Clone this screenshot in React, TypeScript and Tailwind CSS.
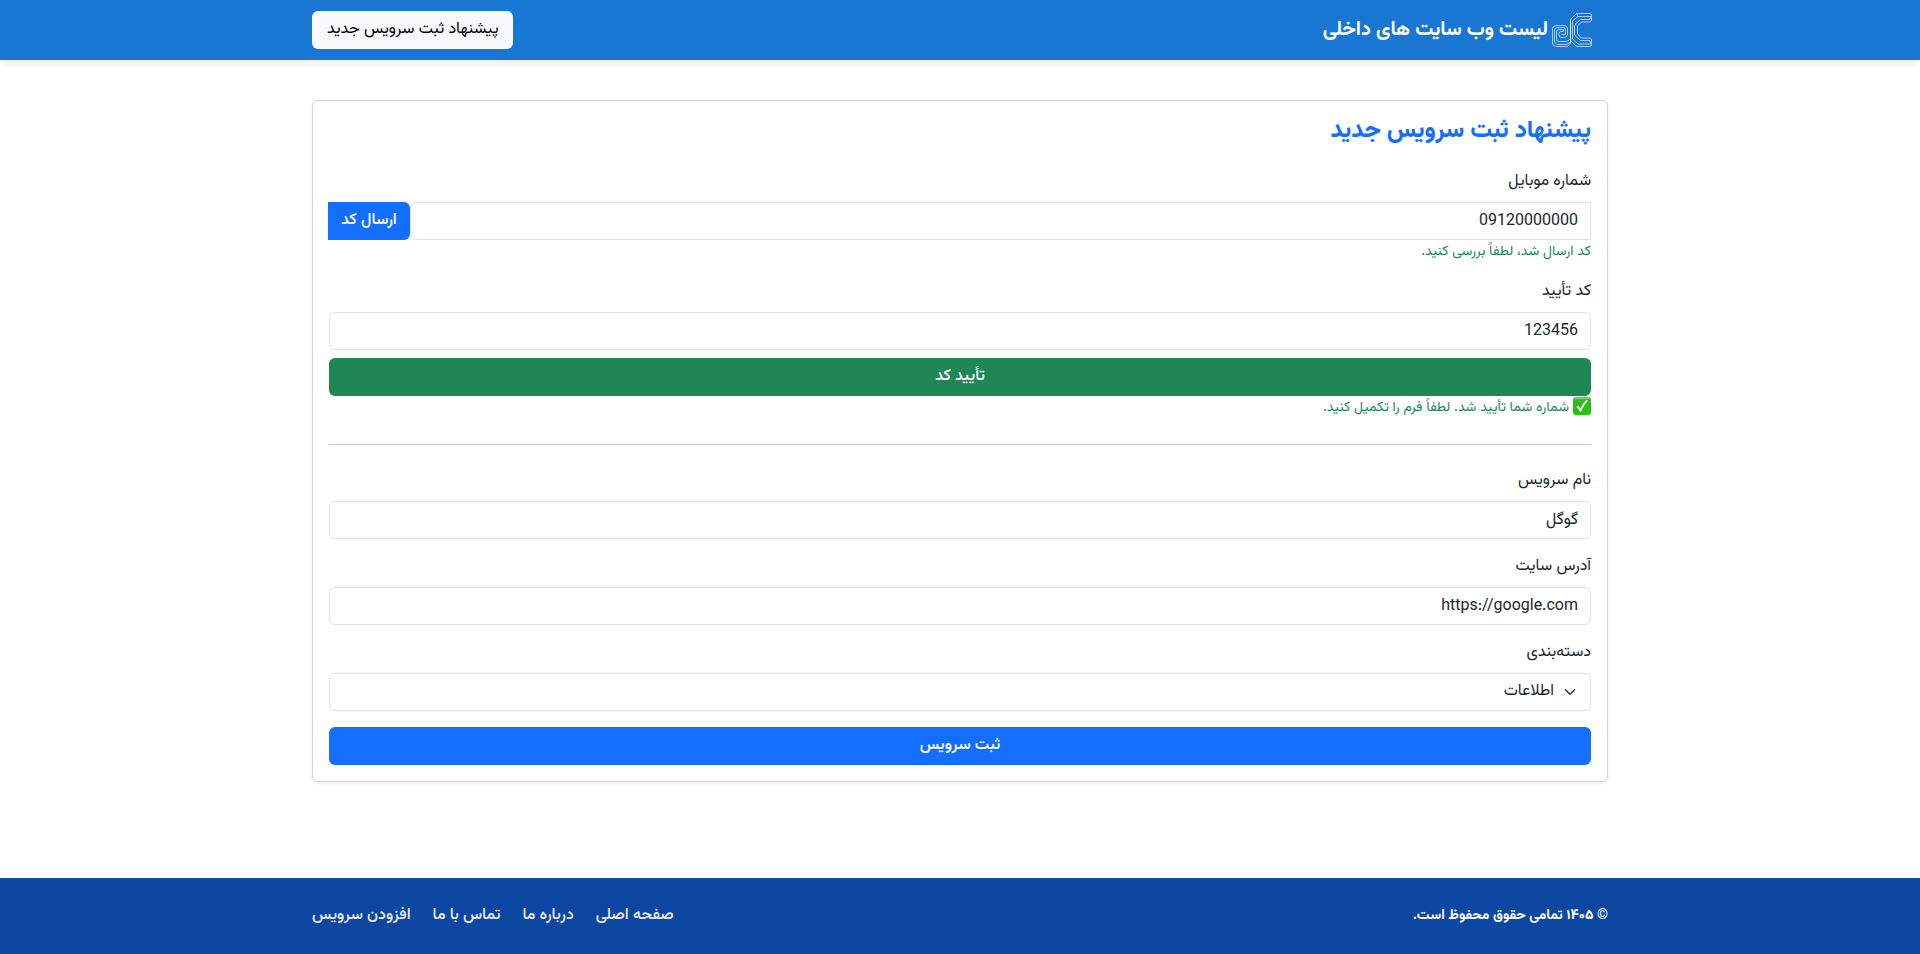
import type { ReactNode } from "react";

const control =
  "block h-[38px] w-full rounded-md border border-[#dee2e6] bg-white px-3 text-right text-base leading-6 text-[#212529] outline-none focus:border-[#86b7fe]";

const footerLinks = ["صفحه اصلی", "درباره ما", "تماس با ما", "افزودن سرویس"];

function Logo() {
  return (
    <svg viewBox="0 0 40 34" className="h-[34px] w-10" fill="none" stroke="#ffffff" strokeOpacity="0.7" strokeWidth="0.9" strokeLinejoin="round" aria-hidden="true">
      <path d="M24.5 0.5H37.5Q39.5 0.5 39.5 2.5V7Q39.5 9 37.5 9H29.5L25.5 13V21L29.5 25H37.5Q39.5 25 39.5 27V31.5Q39.5 33.5 37.5 33.5H24.5L18.5 27.5V6.5Z" />
      <path d="M39 3.5H26L20.5 8V26L26 31H39" />
      <path d="M37.5 6.5H28.5L22.5 12V22L28.5 27.5H37.5" />
      <path d="M24.5 0.5L26 3.5M37.5 6.5L39 3.5M37.5 27.5L39 31" />
      <path d="M4 12.5H12Q15.5 12.5 15.5 16V21.5Q15.5 24 13 24.5H9Q7 24 7 22V20.5Q7 18.5 9 18.5H11.5" />
      <path d="M4 12.5Q0.5 13 0.5 16V30Q0.5 33.5 4 33.5H15.5L18.5 30V6.5" />
      <path d="M11.5 18.5V16.5H7Q4.5 16.5 4.5 19V26.5Q4.5 28.5 7 28.5H15L18.5 26" />
      <path d="M2.5 29V17Q2.5 14.5 5 14.5H11.5Q13.5 14.5 13.5 17V21.5H9.5M2.5 29L5 31.5H15L18 29" />
    </svg>
  );
}

function CheckBadge() {
  return (
    <svg viewBox="0 0 18 18" className="mt-px size-[18px]" aria-hidden="true">
      <defs>
        <linearGradient id="badge" x1="0" y1="0" x2="0" y2="1">
          <stop offset="0" stopColor="#45b83c" />
          <stop offset="0.3" stopColor="#2fb91c" />
          <stop offset="1" stopColor="#28c408" />
        </linearGradient>
      </defs>
      <rect width="18" height="18" rx="3" fill="url(#badge)" />
      <path d="M2 1.2H16" stroke="#a7dda2" strokeWidth="1" strokeLinecap="round" />
      <path d="M3.5 10L5.4 8.8L7.4 11.7C9 8.2 11 5.2 13.6 3L15 3.6C12 6.8 10 10.2 8.3 14.4H6.8C6 12.7 5 11.2 3.5 10Z" fill="#fff" />
    </svg>
  );
}

function Field({ id, label, children }: { id: string; label: string; children: ReactNode }) {
  return (
    <div className="mb-4">
      <label htmlFor={id} className="mb-2 block w-fit">
        {label}
      </label>
      {children}
    </div>
  );
}

export default function App() {
  return (
    <div
      dir="rtl"
      lang="fa"
      className="flex min-h-screen flex-col bg-white font-['Vazirmatn','Roboto','DejaVu_Sans',sans-serif] text-base leading-6 text-[#212529]"
    >
      <header className="bg-[#1976d2] shadow-[0_2px_8px_rgba(0,0,0,0.1)]">
        <div className="mx-auto flex h-[60px] max-w-[1320px] items-center justify-between px-3">
          <a href="#" className="flex items-center gap-1 pr-4 text-xl font-bold text-white">
            <Logo />
            <span>لیست وب سایت های داخلی</span>
          </a>
          <a href="#new" className="flex h-[38px] items-center rounded-md bg-[#f8f9fa] px-[15px] text-black">
            پیشنهاد ثبت سرویس جدید
          </a>
        </div>
      </header>

      <main className="mx-auto w-full max-w-[1320px] grow px-3 py-10">
        <form
          className="rounded-md border border-[#d3d4d5] p-4 shadow-[0_2px_4px_rgba(0,0,0,0.075)]"
          onSubmit={(event) => event.preventDefault()}
        >
          <h1 className="mb-6 text-2xl leading-[29px] font-extrabold text-[#146eff]">پیشنهاد ثبت سرویس جدید</h1>

          <Field id="mobile" label="شماره موبایل">
            <div className="flex">
              <input id="mobile" type="text" defaultValue="09120000000" className={control + " min-w-0 flex-1 rounded-r-none"} />
              <button type="button" className="-ml-px h-[38px] shrink-0 rounded-r-md bg-[#146eff] px-[13px] font-medium text-white">
                ارسال کد
              </button>
            </div>
            <p className="text-sm leading-6 text-[#1f8756]">کد ارسال شد، لطفاً بررسی کنید.</p>
          </Field>

          <label htmlFor="code" className="mb-2 block w-fit">
            کد تأیید
          </label>
          <input id="code" type="text" defaultValue="123456" className={control} />
          <button type="button" className="mt-2 block h-[38px] w-full rounded-md bg-[#1f8756] font-medium text-white">
            تأیید کد
          </button>
          <p className="flex h-6 items-start gap-1 text-sm leading-6 text-[#1f8756]">
            <CheckBadge />
            <span>شماره شما تأیید شد. لطفاً فرم را تکمیل کنید.</span>
          </p>

          <hr className="my-6 border-[#c8c9ca]" />

          <Field id="name" label="نام سرویس">
            <input id="name" type="text" defaultValue="گوگل" className={control} />
          </Field>
          <Field id="url" label="آدرس سایت">
            <input id="url" type="text" defaultValue="https://google.com" className={control} />
          </Field>
          <Field id="category" label="دسته‌بندی">
            <div className="relative">
              <select id="category" defaultValue="info" className={control + " appearance-none pr-9"}>
                <option value="info">اطلاعات</option>
              </select>
              <svg
                viewBox="0 0 16 16"
                className="pointer-events-none absolute top-[13px] right-[15px] size-3"
                fill="none"
                stroke="#343a40"
                strokeWidth="2"
                strokeLinecap="round"
                strokeLinejoin="round"
                aria-hidden="true"
              >
                <path d="m2 5 6 6 6-6" />
              </svg>
            </div>
          </Field>
          <button type="submit" className="block h-[38px] w-full rounded-md bg-[#146eff] font-medium text-white">
            ثبت سرویس
          </button>
        </form>
      </main>

      <footer className="bg-[#0d47a1] text-white">
        <div className="mx-auto flex h-[76px] max-w-[1320px] items-center justify-between px-3">
          <p className="text-sm font-bold">© ۱۴۰۵ تمامی حقوق محفوظ است.</p>
          <nav className="flex gap-[22px]">
            {footerLinks.map((link) => (
              <a key={link} href="#" className="font-medium text-[#e7edf6]">
                {link}
              </a>
            ))}
          </nav>
        </div>
      </footer>
    </div>
  );
}
